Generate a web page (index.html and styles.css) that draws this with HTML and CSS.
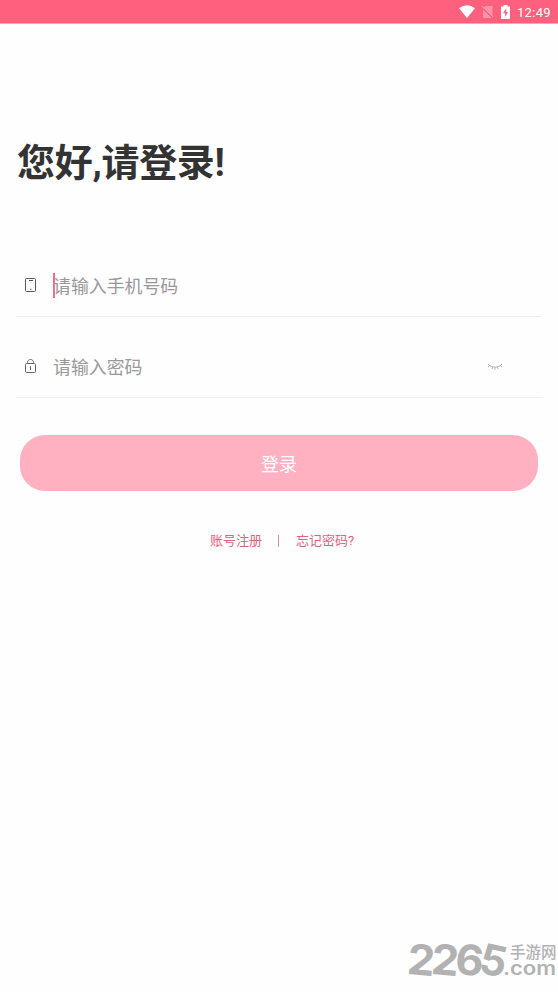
FILE: index.html
```html
<!DOCTYPE html>
<html lang="zh-CN">
<head>
<meta charset="utf-8">
<title>登录</title>
<link rel="stylesheet" href="styles.css">
</head>
<body>
<header class="status">
  <svg class="wifi" width="16" height="13" viewBox="0 0 16 13"><path d="M0 3.2Q8-2.8 16 3.2L8 13Z" fill="#fff"/></svg>
  <svg class="sim" width="11" height="12" viewBox="0 0 11 12"><path d="M3.5 0H10.500V12H1V2.500Z" fill="#ff94a9"/><path d="M0 1L11 12" stroke="#ff607e" stroke-width="2"/><path d="M0 0L11 11" stroke="#ff9fb1"/></svg>
  <svg class="battery" width="9" height="14" viewBox="0 0 9 14"><path d="M2.500 0H6.500V1.500H9V14H0V1.500H2.500Z" fill="#fff"/><path d="M5.300 3.300L2 8.200H4.100V12L7 7H5.100Z" fill="#ff607e"/></svg>
  <span class="clock">12:49</span>
</header>
<main>
  <h1>您好,请登录!</h1>
  <form>
    <div class="field phone-field">
      <svg class="icon" width="12" height="16" viewBox="0 0 12 16" fill="none" stroke="#555"><rect x=".5" y="1.500" width="10" height="13" rx="1"/><path d="M4 3.500H8M5 12.300H6.500" /></svg>
      <span class="caret"></span>
      <span class="placeholder">请输入手机号码</span>
    </div>
    <div class="field password-field">
      <svg class="icon" width="12" height="16" viewBox="0 0 12 16" fill="none" stroke="#666"><rect x=".5" y="5.500" width="10" height="9" rx="1.200"/><path d="M2.500 5V4.500C2.500 2.700 3.800 1.500 5.500 1.500S8.500 2.700 8.500 4.500V5M5.500 8.200V12"/></svg>
      <span class="caret hidden"></span>
      <span class="placeholder">请输入密码</span>
      <svg class="eye" width="16" height="8" viewBox="0 0 16 8" fill="none" stroke="#aaa" stroke-width=".9"><path d="M1 1C4 5.200 12 5.200 15 1M2.600 2.600L1 4M5.700 4L5 6M8 4.300V6.700M10.300 4L11 6M13.400 2.600L15 4"/></svg>
    </div>
    <button type="button">登录</button>
  </form>
  <nav><a>账号注册</a><i></i><a>忘记密码?</a></nav>
</main>
<footer>
  <div class="digits"><span>2</span><span>2</span><span>6</span><span class="five">5</span></div>
  <div class="site"><span class="name">手游网</span><span class="com">.com</span></div>
</footer>
</body>
</html>
```
FILE: styles.css
```css
* { box-sizing: border-box; }
body { margin: 0; height: 992px; overflow: hidden; display: flex; flex-direction: column; background: #fefefe; font-family: Roboto, "Noto Sans CJK SC", sans-serif; }
.status { height: 24px; flex: none; background: #ff607e; border-bottom: 1px solid #ffa5b6; display: flex; align-items: center; justify-content: flex-end; padding-right: 7px; }
.sim { margin-left: 7px; }
.battery { margin-left: 8px; }
.clock { margin-left: 7px; color: #fff; font-size: 13px; font-weight: 400; width: 34px; letter-spacing: .3px; padding-top: 1px; }
main { flex: 1; }
h1 { margin: 111px 0 0 17px; height: 56px; line-height: 56px; font-size: 38px; font-weight: 700; color: #333; white-space: nowrap; letter-spacing: -.3px; }
form { padding: 0 16px; }
.field { display: flex; align-items: center; border-bottom: 1px solid #eaeaea; padding-left: 9px; }
.phone-field { height: 63px; margin-top: 63px; width: 525px; }
.password-field { height: 63px; margin-top: 18px; width: 527px; border-color: #f0f0f0; }
.icon { flex: none; }
.caret { width: 2px; height: 25px; background: #e8708e; margin-left: 16px; flex: none; }
.hidden { visibility: hidden; }
.placeholder { font-size: 17.900px; line-height: 28px; color: #999; margin-left: -2px; padding-top: 4px; }
.eye { margin: 2px 40px 0 auto; }
button { display: block; width: 518px; height: 56px; margin: 37px 0 0 4px; padding: 3px 0 0; border: 0; border-radius: 25px; background: #ffb0c1; color: #fff; font: 18px/53px Roboto, "Noto Sans CJK SC", sans-serif; }
nav { display: flex; align-items: center; height: 24px; margin: 38px 0 0 210px; font-size: 13px; color: #dc6482; }
nav a { padding-bottom: 3px; }
nav i { width: 1px; height: 12px; background: #dc8ba0; margin: 0 17px 0 16px; }
footer { display: flex; align-items: flex-start; height: 53px; margin-left: 408px; color: #b2b2b2; white-space: nowrap; }
.digits { display: flex; width: 102px; flex: none; font: 700 42px/42px Inter, sans-serif; }
.digits span { width: 24px; display: block; transform: rotate(5deg) scaleX(1.04); }
.digits .five { transform: rotate(12deg); }
.site { display: flex; flex-direction: column; }
.name { font: 500 15.500px/14px "Noto Sans CJK SC", sans-serif; margin-top: 5px; }
.com { width: 44px; font: 600 19px/14px Inter, sans-serif; margin: 4px 0 0 -7px; transform: scaleX(1.16); transform-origin: left; }
```
